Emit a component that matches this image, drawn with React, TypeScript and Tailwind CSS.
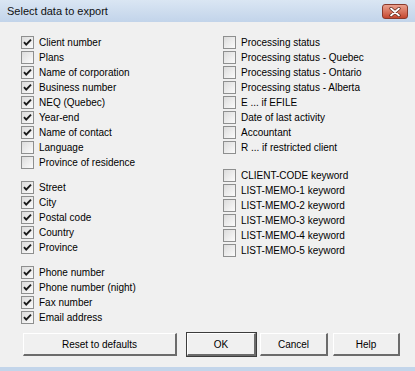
import React from 'react'

type Item = { label: string; checked: boolean; gap?: string }

const left: Item[] = [
  { label: 'Client number', checked: true },
  { label: 'Plans', checked: false },
  { label: 'Name of corporation', checked: true },
  { label: 'Business number', checked: true },
  { label: 'NEQ (Quebec)', checked: true },
  { label: 'Year-end', checked: true },
  { label: 'Name of contact', checked: true },
  { label: 'Language', checked: false },
  { label: 'Province of residence', checked: false },
  { label: 'Street', checked: true, gap: 'mt-[10px]' },
  { label: 'City', checked: true },
  { label: 'Postal code', checked: true },
  { label: 'Country', checked: true },
  { label: 'Province', checked: true },
  { label: 'Phone number', checked: true, gap: 'mt-[10px]' },
  { label: 'Phone number (night)', checked: true },
  { label: 'Fax number', checked: true },
  { label: 'Email address', checked: true },
]

const right: Item[] = [
  { label: 'Processing status', checked: false },
  { label: 'Processing status - Quebec', checked: false },
  { label: 'Processing status - Ontario', checked: false },
  { label: 'Processing status - Alberta', checked: false },
  { label: 'E ... if EFILE', checked: false },
  { label: 'Date of last activity', checked: false },
  { label: 'Accountant', checked: false },
  { label: 'R ... if restricted client', checked: false },
  { label: 'CLIENT-CODE keyword', checked: false, gap: 'mt-[13px]' },
  { label: 'LIST-MEMO-1 keyword', checked: false },
  { label: 'LIST-MEMO-2 keyword', checked: false },
  { label: 'LIST-MEMO-3 keyword', checked: false },
  { label: 'LIST-MEMO-4 keyword', checked: false },
  { label: 'LIST-MEMO-5 keyword', checked: false },
]

function Check({ item }: { item: Item }) {
  return (
    <label className={`flex h-[15px] items-center gap-[5px] ${item.gap ?? ''}`}>
      <span className="flex h-[13px] w-[13px] shrink-0 items-center justify-center border border-[#8e8f8f] bg-gradient-to-br from-[#dcdcdc] to-[#fbfbfb]">
        {item.checked && (
          <svg width="11" height="11" viewBox="0 0 11 11">
            <path d="M2 5.2 L4.2 7.6 L9 2.6" fill="none" stroke="#1a1a1a" strokeWidth="1.9" />
          </svg>
        )}
      </span>
      <span className="whitespace-nowrap">{item.label}</span>
    </label>
  )
}

function Btn({ label, width, main }: { label: string; width: string; main?: boolean }) {
  return (
    <button
      className={`flex h-[25px] ${width} items-center justify-center bg-[#f0f0f0] ${
        main ? 'border border-[#3c3c3c]' : 'border border-transparent'
      }`}
    >
      <span className="flex h-full w-full items-center justify-center border-t border-l border-b-2 border-r-2 border-t-white border-l-white border-b-[#6b6b6b] border-r-[#6b6b6b]">
        {label}
      </span>
    </button>
  )
}

export default function App() {
  return (
    <div className="flex h-[371px] w-[415px] flex-col bg-[#f0f0f0] font-['Liberation_Sans',Arial,sans-serif] text-[10px] text-black">
      <div className="flex h-[22px] items-center justify-between bg-gradient-to-b from-[#dae6f3] to-[#c2d4ea] pl-[7px] pr-[7px]">
        <span className="text-[11px] text-[#111]">Select data to export</span>
        <span className="mt-[1px] flex h-[15px] w-[26px] items-center justify-center rounded-[3px] border border-[#8a3a2c] bg-gradient-to-b from-[#e9a08e] to-[#c5462e]">
          <svg width="12" height="10" viewBox="0 0 12 10">
            <path d="M2 1.5 L10 8.5 M10 1.5 L2 8.5" stroke="#5a2418" strokeWidth="3.2" strokeLinecap="round" />
            <path d="M2 1.5 L10 8.5 M10 1.5 L2 8.5" stroke="#ffffff" strokeWidth="1.8" strokeLinecap="round" />
          </svg>
        </span>
      </div>

      <div className="flex flex-1 flex-col pt-[13px]">
        <div className="flex">
          <div className="flex w-[223px] flex-col pl-[21px]">
            {left.map((it) => (
              <Check key={it.label} item={it} />
            ))}
          </div>
          <div className="flex flex-col">
            {right.map((it) => (
              <Check key={it.label} item={it} />
            ))}
          </div>
        </div>

        <div className="mt-[7px] flex pl-[22px]">
          <Btn label="Reset to defaults" width="w-[156px]" />
          <span className="ml-[8px]">
            <Btn label="OK" width="w-[71px]" main />
          </span>
          <span className="ml-[2px]">
            <Btn label="Cancel" width="w-[70px]" />
          </span>
          <span className="ml-[3px]">
            <Btn label="Help" width="w-[69px]" />
          </span>
        </div>
      </div>

      <div className="h-[4px] bg-[#c3d5ea]" />
    </div>
  )
}
